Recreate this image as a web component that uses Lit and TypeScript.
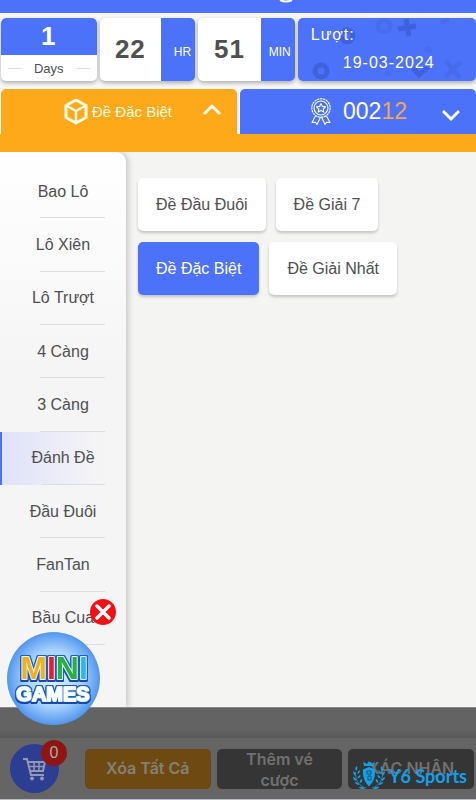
import { LitElement, html, css, svg } from "lit";
import { customElement, state } from "lit/decorators.js";
import { classMap } from "lit/directives/class-map.js";

const MENU = ["Bao Lô", "Lô Xiên", "Lô Trượt", "4 Càng", "3 Càng", "Đánh Đề", "Đầu Đuôi", "FanTan", "Bầu Cua"];
const BETS = ["Đề Đầu Đuôi", "Đề Giải 7", "Đề Đặc Biệt", "Đề Giải Nhất"];

const laurel = (flip: boolean) => svg`<g transform=${flip ? "translate(32 0) scale(-1 1)" : ""}>
  <path d="M13 28C6 26 2 20 2.500 12" fill="none" stroke="#12a0ea" stroke-width=".8"/>
  <path d="M3 11Q1 8 4 6Q5 9 3 11M2.500 16Q-.5 14 .5 11Q3.500 13 2.500 16M3.500 21Q0 20 0 17Q3.500 18 3.500 21M6.500 25Q3 25 1.500 22Q5.500 22 6.500 25M12 28.500Q8 30 5.500 27Q9 26 12 28.500M4.500 14Q4 11 7 10Q7 13 4.500 14M4.500 18.500Q4.500 15.500 7.500 15Q7.500 18 4.500 18.500M7 23Q6 20 9 19Q10 22 7 23" fill="#12a0ea"/></g>`;

@customElement("app-root")
export class AppRoot extends LitElement {
  @state() private menu = "Đánh Đề";
  @state() private bet = "Đề Đặc Biệt";

  static styles = css`
    :host {
      display: flex;
      flex-direction: column;
      position: relative;
      min-height: 100vh;
      background: #f4f4f3;
      color: #505050;
      font-family: "Liberation Sans", Arial, sans-serif;
      font-size: 16px;
    }
    * { box-sizing: border-box; }
    button { font: inherit; color: inherit; border: 0; margin: 0; padding: 0; cursor: pointer; }
    svg { display: block; flex: none; }
    .top { height: 13px; background: #4d72fa; overflow: hidden; display: flex; justify-content: center; align-items: flex-end; }
    .top-mark { width: 14px; height: 13px; margin-left: 96px; }
    .timer { display: grid; grid-template-columns: 96fr 96fr 97fr 179fr; gap: 3px; padding: 5px 0 8px 1px; background: #f7f7f8; }
    .tile { height: 63px; border-radius: 5px; background: #fff; overflow: hidden; box-shadow: 0 2px 4px #0000004d; display: flex; }
    .num { font-size: 26px; font-weight: 700; letter-spacing: 1px; }
    .days { flex-direction: column; }
    .days .num { height: 37px; background: #4d72fa; color: #fff; border-radius: 5px 5px 0 0; display: grid; place-items: center; }
    .days-label { flex: 1; display: flex; align-items: center; justify-content: space-between; padding: 0 7px; font-size: 13px; }
    .dash { width: 13px; height: 1px; background: #ddd; }
    .tile .big { flex: 1; display: grid; place-items: center; }
    .unit { width: 34px; background: #4d72fa; color: #fff; font-size: 12px; display: flex; align-items: center; justify-content: flex-end; padding: 5px 4px 0 0; }
    .draw { position: relative; background: #4d72fa; color: #fff; flex-direction: column; padding: 7px 0 0 13px; gap: 8px; letter-spacing: 1px; }
    .draw span { line-height: 20px; position: relative; }
    .draw .date { padding-left: 32px; }
    .pattern { position: absolute; right: 0; top: 0; opacity: 0.75; }
    .tabs { display: grid; grid-template-columns: 236fr 236fr; gap: 3px; padding-left: 1px; background: #f7f7f8; }
    .tab { height: 45px; border-radius: 5px 5px 0 0; background: #4d72fa; color: #fff; display: flex; align-items: center; padding: 0 16px; }
    .tab.on { background: #fea91a; color: #fffbe4; font-size: 15px; }
    .tab-main { flex: 1; display: flex; align-items: center; justify-content: center; gap: 4px; padding-left: 16px; }
    .tab .result { gap: 12px; padding-left: 20px; font-size: 23px; }
    .last { color: #f5a550; }
    .band { height: 18px; background: #fea91a; flex: none; }
    .main { flex: 1; display: flex; }
    .side { width: 126px; flex: none; background: linear-gradient(#fff, #f5f5f6 40%); border-radius: 0 10px 0 0; box-shadow: 2px 0 6px #0003; clip-path: inset(0 -12px 0 0); padding-top: 13px; }
    .side ul { list-style: none; margin: 0; padding: 0; height: 480px; display: grid; grid-auto-rows: 1fr; }
    .side li { display: grid; }
    .item { position: relative; background: none; }
    .item::after { content: ""; position: absolute; left: 40px; right: 21px; bottom: 0; height: 1px; background: #dedede; }
    .item.on { border-left: 2px solid #4d72fa; background: linear-gradient(90deg, #dfe2fb, #f5f5f600 80%); padding-right: 2px; }
    .bets { flex: 1; display: flex; flex-wrap: wrap; align-content: flex-start; gap: 11px 10px; padding: 26px 70px 0 12px; }
    .bet { height: 53px; padding: 0 18px; border-radius: 5px; background: #fff; box-shadow: 0 2px 3px #0003; white-space: nowrap; }
    .bet.on { background: #4d72fa; color: #fff; }
    .foot { flex: none; background: #656565; border-bottom: 1px solid #b9bccb; }
    .shade { height: 31px; background: linear-gradient(#636363 70%, #595959); border-top: 1px solid #888; }
    .bar { display: grid; grid-template-columns: 49px repeat(3, minmax(0, 1fr)); align-items: center; gap: 6px; height: 61px; padding: 0 2px 0 10px; }
    .cart { position: relative; width: 49px; height: 49px; border-radius: 50%; background: #2c3e91; display: grid; place-items: center; }
    .count { position: absolute; right: -8px; top: -4px; width: 26px; height: 26px; border-radius: 50%; background: #8f1512; color: #aaa; display: grid; place-items: center; }
    .act { height: 40px; border-radius: 5px; background: #353535; color: #717171; font-family: Inter, sans-serif; font-weight: 600; line-height: 21px; padding: 0 16px; }
    .acts { grid-column: 2 / -1; display: grid; grid-template-columns: repeat(3, minmax(0, 1fr)); gap: 6px; padding-left: 20px; }
    .act.clear { background: #6e4a12; color: #858077; }
    .mini { position: absolute; left: 7px; bottom: 75px; width: 93px; height: 93px; border-radius: 50%; background: radial-gradient(closest-side, #e0f1ff, #a9d3ff 60%, #5396ee); }
    .mini text { font-weight: 700; paint-order: stroke; stroke-linejoin: round; stroke: #e8f5ff; stroke-width: 2px; }
    .logo { filter: drop-shadow(1px 0 0 #1c5fc0) drop-shadow(-1px 0 0 #1c5fc0) drop-shadow(0 -1px 0 #1c5fc0) drop-shadow(0 2px 0 #174aa8); }
    .close { position: absolute; left: 90px; bottom: 175px; width: 26px; height: 26px; border-radius: 50%; background: #f01116; display: grid; place-items: center; }
    .brand { position: absolute; right: 9px; bottom: 9px; display: flex; align-items: center; gap: 4px; color: #12a0ea; text-decoration: none; font-family: Lato, sans-serif; font-size: 18px; font-weight: 700; }
  `;

  private chevron(d: string) {
    return html`<svg width="18" height="20" viewBox="0 0 18 20" fill="none" stroke="#fffdf4" stroke-width="3"><path d=${d} /></svg>`;
  }

  render() {
    return html`
      <header class="top">
        <svg class="top-mark" viewBox="0 0 14 13"><path d="M1 0Q7 3 13 0" fill="none" stroke="#fff" stroke-width="2" /></svg>
      </header>
      <section class="timer">
        <div class="tile days">
          <span class="num">1</span>
          <span class="days-label"><i class="dash"></i>Days<i class="dash"></i></span>
        </div>
        <div class="tile"><span class="num big">22</span><span class="unit">HR</span></div>
        <div class="tile"><span class="num big">51</span><span class="unit">MIN</span></div>
        <div class="tile draw">
          <svg class="pattern" width="179" height="63" viewBox="0 0 179 63" fill="none" stroke="#3c5cd4" stroke-width="5">
            <circle cx="50" cy="18" r="6" /><circle cx="24" cy="53" r="6" />
            <circle cx="87" cy="8" r="6" opacity=".35" />
            <path d="M101 11l18-3M109 1l3 17M116 50l6 7 9-8" />
            <path d="M149 43l14 17M164 44l-16 15M144 5l8-4" opacity=".4" />
            <path d="M83 41l7 4M128 30l7 4M88 57l6-3" opacity=".35" />
          </svg>
          <span>Lượt:</span><span class="date">19-03-2024</span>
        </div>
      </section>
      <nav class="tabs">
        <button class="tab on">
          <span class="tab-main">
            <svg width="24" height="27" viewBox="0 0 24 27" fill="none" stroke="#fffbe4" stroke-width="3" stroke-linejoin="round">
              <path d="M12 2L22 7.500V19.500L12 25L2 19.500V7.500Z" /><path d="M3 8l9 5 9-5M12 13v11" stroke-width="2.500" />
            </svg>
            <span>Đề Đặc Biệt</span>
          </span>
          ${this.chevron("M1 12L9 4L17 12")}
        </button>
        <button class="tab">
          <span class="tab-main result">
            <svg width="20" height="27" viewBox="0 0 20 27" fill="none" stroke="#fff" stroke-width="1.100" stroke-linejoin="round">
              <circle cx="10" cy="10" r="9.200" stroke-dasharray="2.500 .5" /><circle cx="10" cy="10" r="7" />
              <path d="M10 5.500l1.400 2.900 3.100.4-2.300 2.200.6 3.100-2.800-1.500-2.800 1.500.6-3.100-2.300-2.200 3.100-.4Z" />
              <path d="M4.500 18L1 24.500l3.500-.3 1.500 2.300 3.500-7.500M15.500 18l3.500 6.500-3.500-.3-1.500 2.300-3.500-7.500" />
            </svg>
            <span>002<span class="last">12</span></span>
          </span>
          ${this.chevron("M1 9L9 17L17 9")}
        </button>
      </nav>
      <div class="band"></div>
      <main class="main">
        <nav class="side">
          <ul>
            ${MENU.map((m) => html`<li><button class=${classMap({ item: true, on: m === this.menu })} @click=${() => (this.menu = m)}>${m}</button></li>`)}
          </ul>
        </nav>
        <section class="bets">
          ${BETS.map((b) => html`<button class=${classMap({ bet: true, on: b === this.bet })} @click=${() => (this.bet = b)}>${b}</button>`)}
        </section>
      </main>
      <footer class="foot">
        <div class="shade"></div>
        <div class="bar">
          <button class="cart" aria-label="Giỏ hàng">
            <svg width="24" height="24" viewBox="0 0 24 24" fill="none" stroke="#9499b3" stroke-width="2">
              <path d="M0 2h4l4 16h13" /><path d="M5 5h17l-2 9H7" />
              <path d="M6 9.500h15M11 5v9M16 5v9" stroke-width="1.500" />
              <circle cx="9" cy="21.500" r="1" /><circle cx="19" cy="21.500" r="1" />
            </svg>
            <span class="count">0</span>
          </button>
          <div class="acts">
            <button class="act clear">Xóa Tất Cả</button>
            <button class="act">Thêm vé cược</button>
            <button class="act">XÁC NHẬN</button>
          </div>
        </div>
      </footer>
      <button class="mini" aria-label="Mini Games">
        <svg width="93" height="93" viewBox="0 0 93 93">
          <g class="logo" text-anchor="middle">
            <text x="47" y="47" font-size="32"><tspan fill="#f0b020">M</tspan><tspan fill="#e3202b">I</tspan><tspan fill="#27b03c">N</tspan><tspan fill="#2fb4f0">I</tspan></text>
            <text class="games" x="46" y="69" font-size="20" fill="#fff">GAMES</text>
          </g>
        </svg>
      </button>
      <button class="close" aria-label="Đóng">
        <svg width="16" height="16" viewBox="0 0 16 16" stroke="#fff" stroke-width="3.500" stroke-linecap="round"><path d="M2 2l12 12M14 2L2 14" /></svg>
      </button>
      <a class="brand" href="#">
        <svg width="32" height="31" viewBox="0 0 32 31">
          ${laurel(false)}${laurel(true)}
          <path d="M16 7l6 2.500q1 10-6 17q-7-7-6-17ZM11 6L10 2l4 2 2-3 2 3 4-2-1 4Z" fill="#12a0ea" />
          <path d="M14 11h4v3h-4zM15 16h3v4h-3z" fill="none" stroke="#24506a" />
        </svg>
        <span>Y6 Sports</span>
      </a>
    `;
  }
}
